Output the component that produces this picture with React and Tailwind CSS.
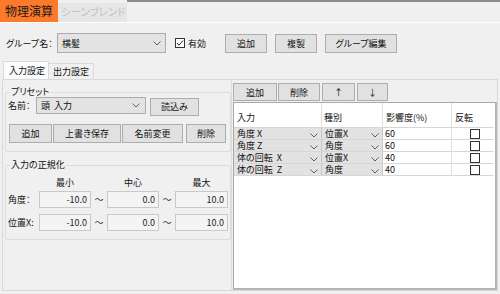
import React from "react";

const Chevron = ({ className = "" }) => (
  <svg width="8" height="5" viewBox="0 0 8 5" className={className}>
    <polyline points="0.5,0.5 4,4 7.5,0.5" fill="none" stroke="#606060" strokeWidth="1" />
  </svg>
);

const Btn = ({ w, h = "h-[19px]", children, className = "" }) => (
  <div
    className={`${w} ${h} ${className} shrink-0 flex items-center justify-center bg-[#e1e1e1] border border-[#adadad] text-[#111] whitespace-nowrap`}
  >
    {children}
  </div>
);

const NumBox = ({ v, w }) => (
  <div className={`${w} h-[17px] shrink-0 border border-[#c9c9c9] bg-[#f4f4f4] flex items-center justify-end pr-[3px] text-[#222]`}>
    {v}
  </div>
);

const Tilde = () => <div className="w-[16px] shrink-0 text-center text-[#333]">～</div>;

const ComboCell = ({ text, w }) => (
  <div className={`${w} h-full shrink-0 bg-[#e2e2e2] border-r border-[#c8c8c8] flex items-center pl-[3px] pr-[3px] justify-between whitespace-pre`}>
    <span className="leading-none">{text}</span>
    <Chevron className="mt-[3px]" />
  </div>
);

const rows = [
  ["角度 X", "位置X", "60"],
  ["角度 Z", "角度", "60"],
  ["体の回転  X", "位置X", "40"],
  ["体の回転  Z", "角度", "40"],
];

export default function App() {
  return (
    <div className="w-[500px] h-[294px] bg-[#f0f0f0] overflow-hidden text-[9px] leading-none text-[#111] font-[family-name:'Noto_Sans_CJK_JP','Noto_Sans',sans-serif] [font-feature-settings:'palt']">
      {/* top tab strip */}
      <div className="flex h-[23px] border-b border-white">
        <div className="w-[58px] h-[22px] shrink-0 bg-[#fd7a2a] text-[12px] text-[#1a1a1a] flex items-center pl-[5px] whitespace-nowrap">
          物理演算
        </div>
        <div className="w-[69px] h-[19px] shrink-0 mt-[3px] bg-[#e6e6e6] text-[10.5px] text-[#c2c2c2] flex items-center pl-[3px] whitespace-nowrap overflow-hidden">
          シーンブレンド
        </div>
        <div className="flex-1 border-t-2 border-[#8c8c8c]"></div>
      </div>

      {/* group row */}
      <div className="flex items-center h-[20px] mt-[10px] whitespace-nowrap">
        <div className="w-[57px] pl-[6px] shrink-0">グループ名：</div>
        <div className="w-[109px] h-[20px] shrink-0 bg-[#e3e3e3] border border-[#acacac] flex items-center justify-between pl-[4px] pr-[4px]">
          <span>横髪</span>
          <Chevron />
        </div>
        <div className="w-[50px] ml-[9px] shrink-0 flex items-center">
          <div className="w-[10px] h-[10px] bg-white border border-[#333] flex items-center justify-center">
            <svg width="8" height="8" viewBox="0 0 8 8">
              <polyline points="1,4 3,6.2 7,1.5" fill="none" stroke="#222" strokeWidth="1" />
            </svg>
          </div>
          <span className="ml-[3px]">有効</span>
        </div>
        <Btn w="w-[42px]">追加</Btn>
        <Btn w="w-[42px]" className="ml-[8px]">複製</Btn>
        <Btn w="w-[72px]" className="ml-[8px]">グループ編集</Btn>
      </div>

      {/* sub tabs */}
      <div className="flex items-end h-[18px] mt-[8px] pl-[3px] whitespace-nowrap">
        <div className="w-[46px] h-[18px] bg-[#fbfbfb] border border-b-0 border-[#d9d9d9] flex items-center pl-[5px]">
          入力設定
        </div>
        <div className="w-[45px] h-[16px] bg-[#f0f0f0] border border-b-0 border-l-0 border-[#d9d9d9] flex items-center pl-[4px]">
          出力設定
        </div>
      </div>

      {/* content */}
      <div className="mx-[2px] w-[496px] h-[212px] border border-[#d9d9d9] flex whitespace-nowrap">
        {/* left column */}
        <div className="w-[228px] shrink-0 flex flex-col pl-[2px]">
          <fieldset className="mt-[7px] w-[226px] border border-[#dcdcdc] rounded-[2px] pb-[8px]">
            <legend className="ml-[4px] px-[1px] leading-[10px]">プリセット</legend>
            <div className="flex items-center h-[17px]">
              <div className="w-[30px] pl-[2px] shrink-0">名前：</div>
              <div className="w-[110px] h-[17px] shrink-0 bg-[#e3e3e3] border border-[#acacac] flex items-center justify-between pl-[4px] pr-[5px]">
                <span>頭&nbsp;&nbsp;入力</span>
                <Chevron />
              </div>
              <Btn w="w-[49px]" h="h-[18px]" className="ml-[4px] mt-[2px]">読込み</Btn>
            </div>
            <div className="flex items-center mt-[10px] pl-[3px]">
              <Btn w="w-[43px]">追加</Btn>
              <Btn w="w-[68px]" className="ml-[1px]">上書き保存</Btn>
              <Btn w="w-[61px]" className="ml-[1px]">名前変更</Btn>
              <Btn w="w-[40px]" className="ml-[3px]">削除</Btn>
            </div>
          </fieldset>

          <fieldset className="mt-[8px] w-[226px] border border-[#dcdcdc] rounded-[2px] pb-[8px]">
            <legend className="ml-[4px] px-[1px] leading-[10px]">入力の正規化</legend>
            <div className="flex items-center h-[10px] mt-[7px] pl-[33px]">
              <div className="w-[52px] text-center">最小</div>
              <div className="w-[16px]"></div>
              <div className="w-[52px] text-center">中心</div>
              <div className="w-[16px]"></div>
              <div className="w-[53px] text-center">最大</div>
            </div>
            <div className="flex items-center mt-[4px]">
              <div className="w-[33px] pl-[2px] shrink-0">角度：</div>
              <NumBox v="-10.0" w="w-[52px]" />
              <Tilde />
              <NumBox v="0.0" w="w-[52px]" />
              <Tilde />
              <NumBox v="10.0" w="w-[53px]" />
            </div>
            <div className="flex items-center mt-[6px]">
              <div className="w-[33px] pl-[2px] shrink-0">位置X:</div>
              <NumBox v="-10.0" w="w-[52px]" />
              <Tilde />
              <NumBox v="0.0" w="w-[52px]" />
              <Tilde />
              <NumBox v="10.0" w="w-[53px]" />
            </div>
          </fieldset>
        </div>

        {/* right column */}
        <div className="flex-1 flex flex-col border-l border-[#dcdcdc]">
          <div className="flex items-end h-[21px] pl-[1px]">
            <Btn w="w-[44px]" h="h-[18px]">追加</Btn>
            <Btn w="w-[42px]" h="h-[18px]" className="ml-[1px]">削除</Btn>
            <Btn w="w-[33px]" h="h-[18px]" className="ml-[2px]">↑</Btn>
            <Btn w="w-[31px]" h="h-[18px]" className="ml-[2px]">↓</Btn>
          </div>
          <div className="flex-1 ml-[1px] mt-[1px] bg-white border-t border-l border-[#a8a8a8] border-r-2 border-b-2 border-r-[#b4b4b4] border-b-[#b4b4b4]">
            <div className="flex h-[25px] border-b border-[#d6d6d6] w-[259px]">
              <div className="w-[88px] border-r border-[#e0e0e0] flex items-end pb-[5px] pl-[3px]">入力</div>
              <div className="w-[61px] border-r border-[#e0e0e0] flex items-end pb-[5px] pl-[2px]">種別</div>
              <div className="w-[69px] border-r border-[#e0e0e0] flex items-end pb-[5px] pl-[3px]">影響度(%)</div>
              <div className="w-[41px] flex items-end pb-[5px] pl-[3px]">反転</div>
            </div>
            {rows.map((r, i) => (
              <div key={i} className="flex h-[12px] border-b border-[#d6d6d6] w-[259px]">
                <ComboCell text={r[0]} w="w-[88px]" />
                <ComboCell text={r[1]} w="w-[61px]" />
                <div className="w-[69px] border-r border-[#e0e0e0] flex items-center pl-[2px]">{r[2]}</div>
                <div className="w-[41px] flex items-center pl-[18px]">
                  <div className="w-[10px] h-[10px] bg-white border border-[#333]"></div>
                </div>
              </div>
            ))}
          </div>
        </div>
      </div>
    </div>
  );
}
